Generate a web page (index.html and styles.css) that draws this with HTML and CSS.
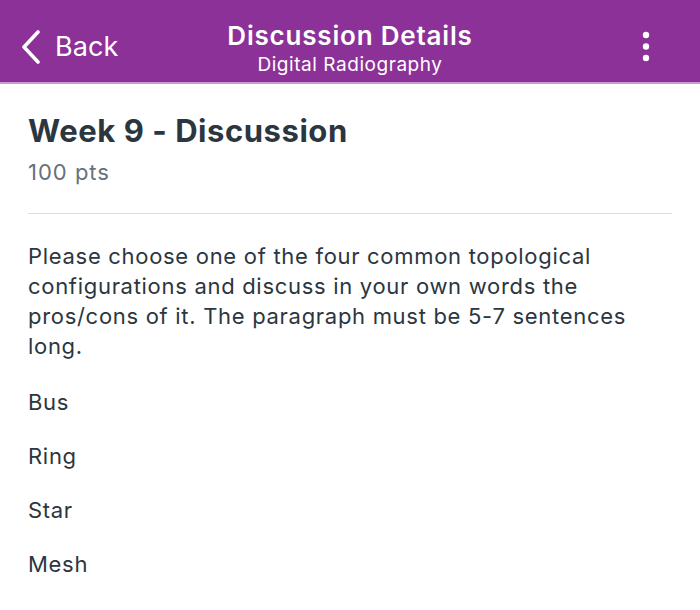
FILE: index.html
```html
<!DOCTYPE html>
<html>
<head>
<meta charset="utf-8">
<link rel="stylesheet" href="styles.css">
</head>
<body>
<header class="nav">
  <div class="nav-left">
    <svg class="chev" width="20" height="34" viewBox="0 0 20 34"><path d="M17 2 L3 17 L17 32" fill="none" stroke="#fff" stroke-width="3.6" stroke-linecap="round" stroke-linejoin="round"/></svg>
    <span class="back">Back</span>
  </div>
  <div class="nav-center">
    <div class="nav-title">Discussion Details</div>
    <div class="nav-sub">Digital Radiography</div>
  </div>
  <div class="nav-right">
    <svg width="8" height="32" viewBox="0 0 8 32"><circle cx="4" cy="4" r="3.2" fill="#fff"/><circle cx="4" cy="15.5" r="3.2" fill="#fff"/><circle cx="4" cy="27" r="3.2" fill="#fff"/></svg>
  </div>
</header>
<main class="content">
  <h1 class="title">Week 9 - Discussion</h1>
  <div class="pts">100 pts</div>
  <hr class="divider">
  <p class="body">Please choose one of the four common topological configurations and discuss in your own words the pros/cons of it. The paragraph must be 5-7 sentences long.</p>
  <p class="item first">Bus</p>
  <p class="item">Ring</p>
  <p class="item">Star</p>
  <p class="item">Mesh</p>
</main>
</body>
</html>
```
FILE: styles.css
```css
html, body { margin: 0; padding: 0; background: #fff; }
body { font-family: Inter, "Noto Sans", sans-serif; color: #2b3640; width: 700px; height: 610px; overflow: hidden; }
.nav {
  height: 82px;
  background: #8c3198;
  border-bottom: 2px solid #c89ccd;
  display: grid;
  grid-template-columns: 1fr auto 1fr;
  align-items: start;
  color: #fff;
}
.nav-left { display: flex; align-items: center; padding-left: 21px; gap: 14px; padding-top: 30px; }
.back { font-size: 27px; line-height: 34px; letter-spacing: 0.1px; }
.nav-center { text-align: center; padding-top: 21px; }
.nav-title { font-size: 26px; font-weight: 600; line-height: 30px; letter-spacing: 0.8px; }
.nav-sub { font-size: 19px; line-height: 24px; margin-top: 2px; letter-spacing: 0.55px; }
.nav-right { display: flex; justify-content: flex-end; padding-right: 50px; padding-top: 31px; }
.content { padding: 0 28px; }
.title { margin: 0; padding-top: 28px; font-size: 31px; font-weight: 700; line-height: 38px; color: #2b3640; letter-spacing: 0.55px; }
.pts { font-size: 22px; color: #66717b; line-height: 30px; margin-top: 7px; letter-spacing: 1px; }
.divider { border: 0; border-top: 1px solid #dddddd; margin: 26px 0 0; }
.body { font-size: 22px; line-height: 30px; margin: 27px 0 0; letter-spacing: 0.7px; }
.item { font-size: 22px; line-height: 30px; margin: 24px 0 0; letter-spacing: 0.7px; }
.item.first { margin-top: 26px; }
```
